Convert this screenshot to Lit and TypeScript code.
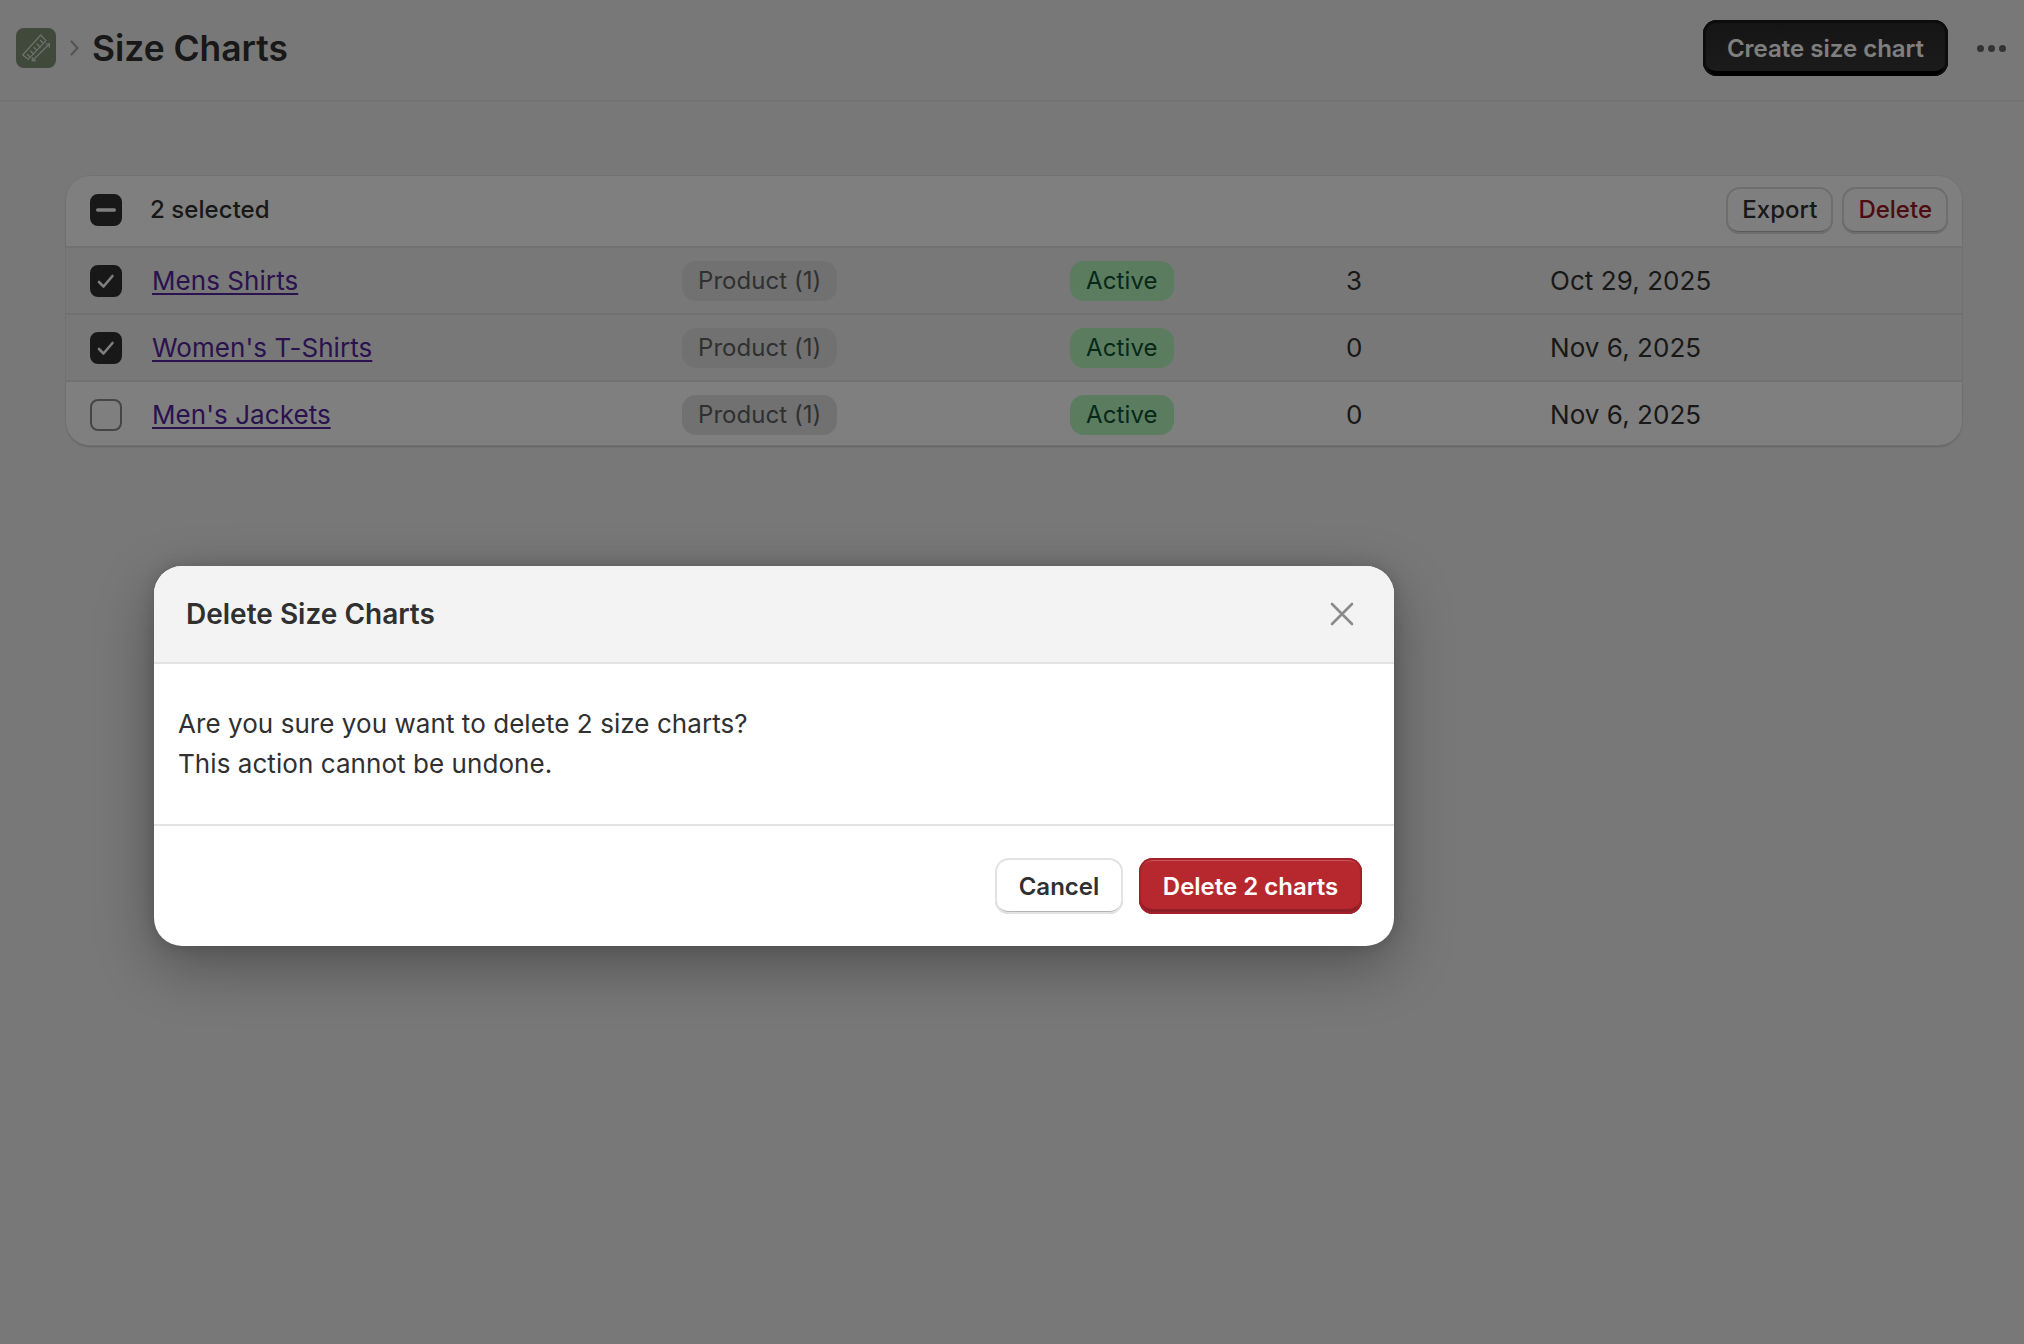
import { LitElement, html, css } from "lit";
import { customElement } from "lit/decorators.js";

const rows = [
  { name: "Mens Shirts", count: "3", date: "Oct 29, 2025", sel: true },
  { name: "Women's T-Shirts", count: "0", date: "Nov 6, 2025", sel: true },
  { name: "Men's Jackets", count: "0", date: "Nov 6, 2025", sel: false },
];

@customElement("app-root")
export class AppRoot extends LitElement {
  static styles = css`
    :host {
      display: block;
      position: relative;
      width: 2024px;
      height: 1344px;
      overflow: hidden;
      background: #f1f1f1;
      font-family: Inter, "Liberation Sans", sans-serif;
      color: #303030;
      font-size: 26px;
      letter-spacing: 0.06px;
    }
    .topbar {
      height: 96px;
      padding: 0 18px 4px 16px;
      border-bottom: 2px solid #e6e6e6;
      display: flex;
      align-items: center;
    }
    .app-icon {
      width: 40px;
      height: 40px;
      border-radius: 8px;
      background: #7e9474;
      flex: none;
      display: flex;
    }
    .crumb {
      margin: 0 13px 0 14px;
      display: flex;
    }
    h1 {
      margin: 0;
      font-size: 35.4px;
      font-weight: 600;
      color: #303030;
      flex: 1;
      letter-spacing: 0;
    }
    .primary {
      width: 245px;
      height: 56px;
      box-sizing: border-box;
      border-radius: 14px;
      border: 0;
      background: linear-gradient(#2a2a2a, #383838);
      color: #fff;
      font: 600 24px Inter, sans-serif;
      box-shadow: inset 0 3px 0 #1a1a1a, inset 3px 0 0 #1a1a1a, inset -3px 0 0 #1a1a1a, inset 0 -5px 0 #000;
      padding: 0;
    }
    .more {
      display: flex;
      gap: 4px;
      margin-left: 29px;
    }
    .more i {
      width: 7px;
      height: 7px;
      border-radius: 50%;
      background: #666;
      display: block;
    }
    .content {
      padding: 74px 62px 0 66px;
    }
    .card {
      background: #fff;
      border-radius: 24px;
      box-shadow: 0 0 0 1px #e3e3e3, 0 2px 2px rgba(0, 0, 0, 0.2);
      overflow: hidden;
    }
    .bulk {
      height: 68px;
      display: flex;
      align-items: center;
      padding: 0 14px 2px 24px;
      border-bottom: 2px solid #e3e3e3;
      font-size: 24px;
      font-weight: 500;
    }
    .bulk .count-label {
      margin: 0 0 2px 28px;
      flex: 1;
    }
    .ghost {
      height: 47px;
      box-sizing: border-box;
      border-radius: 14px;
      border: 0;
      background: #fff;
      box-shadow: inset 0 0 0 2px #dcdcdc, inset 0 -3px 0 #b5b5b5;
      font: 500 24px Inter, sans-serif;
      color: #303030;
      padding: 0 16px 2px;
      margin-left: 9px;
    }
    .ghost.danger {
      color: #981824;
    }
    .row {
      height: 65px;
      display: grid;
      grid-template-columns: 62px 530px 388px 276px 204px 1fr;
      align-items: center;
      padding-left: 24px;
      border-bottom: 2px solid #e3e3e3;
    }
    .row.sel {
      background: #f1f1f1;
    }
    .row:last-child {
      border-bottom: 0;
      box-sizing: border-box;
      height: 63px;
      padding-top: 2px;
    }
    .box {
      width: 32px;
      height: 32px;
      box-sizing: border-box;
      border-radius: 8px;
      border: 2px solid #8a8a8a;
      background: #fff;
      display: flex;
      align-items: center;
      justify-content: center;
      flex: none;
    }
    .box.on {
      background: #303030;
      border-color: #303030;
    }
    a {
      color: #55249c;
      text-decoration: underline;
      text-underline-offset: 3px;
    }
    .tag {
      justify-self: start;
      height: 40px;
      display: flex;
      align-items: center;
      padding: 0 16px;
      border-radius: 14px;
      background: #e3e3e3;
      color: #616161;
      font-size: 24px;
      letter-spacing: 0.05px;
    }
    .tag.active {
      background: #b8f8c0;
      color: #0c5132;
      letter-spacing: 0.12px;
    }
    .overlay {
      position: absolute;
      inset: 0;
      background: rgba(0, 0, 0, 0.5);
    }
    .dialog {
      position: absolute;
      left: 154px;
      top: 566px;
      width: 1240px;
      height: 380px;
      background: #fff;
      border-radius: 28px;
      overflow: hidden;
      box-shadow: 0 20px 60px rgba(0, 0, 0, 0.32), 0 0 16px rgba(0, 0, 0, 0.15);
      display: flex;
      flex-direction: column;
    }
    .dhead {
      height: 96px;
      background: #f3f3f3;
      border-bottom: 2px solid #e3e3e3;
      display: flex;
      align-items: center;
      justify-content: space-between;
      padding: 0 40px 0 32px;
      flex: none;
    }
    .dhead h2 {
      margin: 0;
      font-size: 28px;
      font-weight: 600;
      color: #303030;
      letter-spacing: 0;
    }
    .dbody {
      height: 162px;
      box-sizing: border-box;
      padding: 40px 24px 0;
      border-bottom: 2px solid #e3e3e3;
      line-height: 40px;
      flex: none;
    }
    .dbody p {
      margin: 0;
    }
    .dfoot {
      flex: 1;
      display: flex;
      justify-content: flex-end;
      gap: 16px;
      padding: 32px 32px 0 0;
    }
    .btn {
      height: 56px;
      box-sizing: border-box;
      border-radius: 14px;
      border: 0;
      font: 600 24px Inter, sans-serif;
      padding: 0;
    }
    .btn.cancel {
      width: 128px;
      background: #fff;
      color: #303030;
      box-shadow: inset 0 0 0 2px #e3e3e3, inset 0 -3px 0 #b5b5b5;
    }
    .btn.del {
      width: 223px;
      background: #b7282e;
      color: #fff;
      box-shadow: inset 0 0 0 2px #a3202a, inset 0 3px 0 #c9555a, inset 0 -5px 0 #8e1f28;
    }
  `;

  private check() {
    return html`<svg width="20" height="20" viewBox="0 0 20 20" fill="none"><path d="M3 11 7.5 15.5 16.5 5" stroke="#fff" stroke-width="2.6" stroke-linecap="round" stroke-linejoin="round"/></svg>`;
  }

  render() {
    return html`
      <div class="topbar">
        <div class="app-icon">
          <svg width="40" height="40" viewBox="0 0 40 40" fill="none" stroke="#dfe3da" stroke-width="1.2" stroke-linejoin="round" stroke-linecap="round">
            <path d="M6.7 27 24.7 7 30 12.7 12.3 31.3Z"/>
            <path d="M11.5 26.5l2 2M14.5 23l3 3M18 19.5l2 2M21 16l3 3M24.5 12.5l2 2"/>
            <path d="M16.3 32.7 33.3 16"/>
            <path d="M16.3 29.5v3.2h3.2M30 16h3.3v3.2"/>
          </svg>
        </div>
        <span class="crumb">
          <svg width="9" height="16" viewBox="0 0 9 16" fill="none"><path d="M1.5 1.5 7.5 8l-6 6.5" stroke="#a8a8a8" stroke-width="2.2" stroke-linecap="round" stroke-linejoin="round"/></svg>
        </span>
        <h1>Size Charts</h1>
        <button class="primary">Create size chart</button>
        <div class="more"><i></i><i></i><i></i></div>
      </div>
      <div class="content">
        <div class="card">
          <div class="bulk">
            <span class="box on">
              <svg width="20" height="20" viewBox="0 0 20 20"><rect x="0" y="8.3" width="20" height="3.4" rx="1.7" fill="#fff"/></svg>
            </span>
            <span class="count-label">2 selected</span>
            <button class="ghost">Export</button>
            <button class="ghost danger">Delete</button>
          </div>
          ${rows.map(
            (r) => html`
              <div class="row ${r.sel ? "sel" : ""}">
                <span class="box ${r.sel ? "on" : ""}">${r.sel ? this.check() : ""}</span>
                <span><a href="#">${r.name}</a></span>
                <span class="tag">Product (1)</span>
                <span class="tag active">Active</span>
                <span>${r.count}</span>
                <span>${r.date}</span>
              </div>
            `
          )}
        </div>
      </div>
      <div class="overlay"></div>
      <div class="dialog">
        <div class="dhead">
          <h2>Delete Size Charts</h2>
          <svg width="24" height="24" viewBox="0 0 24 24" fill="none"><path d="M2 2l20 20M22 2 2 22" stroke="#8a8a8a" stroke-width="2.6" stroke-linecap="round"/></svg>
        </div>
        <div class="dbody">
          <p>Are you sure you want to delete 2 size charts?</p>
          <p>This action cannot be undone.</p>
        </div>
        <div class="dfoot">
          <button class="btn cancel">Cancel</button>
          <button class="btn del">Delete 2 charts</button>
        </div>
      </div>
    `;
  }
}
